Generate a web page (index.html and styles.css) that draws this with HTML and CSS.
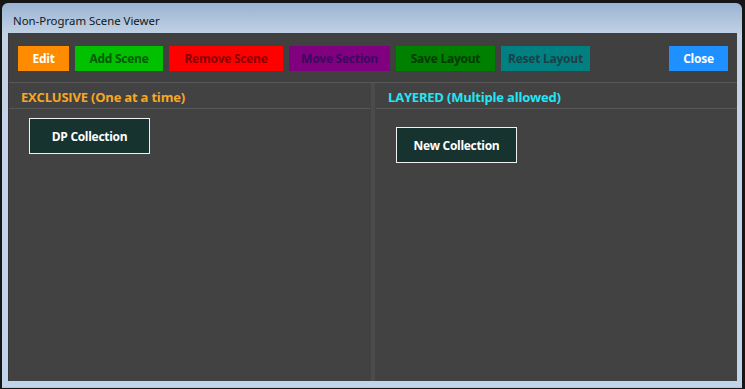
FILE: index.html
```html
<!DOCTYPE html>
<html lang="en">
<head>
    <meta charset="UTF-8">
    <meta name="viewport" content="width=device-width, initial-scale=1.0">
    <title>Non-Program Scene Viewer</title>
    <link rel="stylesheet" href="styles.css">
</head>
<body>
    <div class="window">
        <div class="titlebar">Non-Program Scene Viewer</div>
        <div class="client">
            <div class="toolbar">
                <button class="btn btn-edit">Edit</button>
                <button class="btn btn-add">Add Scene</button>
                <button class="btn btn-remove">Remove Scene</button>
                <button class="btn btn-move">Move Section</button>
                <button class="btn btn-save">Save Layout</button>
                <button class="btn btn-reset">Reset Layout</button>
                <span class="spacer"></span>
                <button class="btn btn-close">Close</button>
            </div>
            <div class="panels">
                <div class="panel">
                    <div class="panel-header exclusive">EXCLUSIVE (One at a time)</div>
                    <div class="panel-body">
                        <div class="scene">DP Collection</div>
                    </div>
                </div>
                <div class="divider"></div>
                <div class="panel">
                    <div class="panel-header layered">LAYERED (Multiple allowed)</div>
                    <div class="panel-body">
                        <div class="scene scene-new">New Collection</div>
                    </div>
                </div>
            </div>
        </div>
    </div>
</body>
</html>
```

FILE: styles.css
```css
body {
    margin: 0;
    background-color: #161616;
    font-family: "Open Sans", "Noto Sans", Arial, sans-serif;
}
.window {
    margin: 3px 3px 1px 2px;
    height: 385px;
    padding: 0 5px 6px 6px;
    box-sizing: border-box;
    border-radius: 6px 6px 0 0;
    background: linear-gradient(to bottom, #9ab3d2 0, #c3d3e6 32px, #c0d4ea 100%);
    border-bottom: 1px solid #8ed6f2;
    display: flex;
    flex-direction: column;
}
.titlebar {
    height: 30px;
    padding-left: 5px;
    line-height: 36px;
    font-family: "Noto Sans", "Open Sans", sans-serif;
    font-size: 11.4px;
    color: #101820;
}
.client {
    flex: 1;
    background-color: #424242;
    display: flex;
    flex-direction: column;
    border-left: 1px solid #363636;
}
.toolbar {
    display: flex;
    gap: 6px;
    height: 50px;
    padding: 13px 9px 0 9px;
    box-sizing: border-box;
    border-bottom: 1px solid #575757;
    background-color: #404040;
}
.spacer {
    flex: 1;
}
.btn {
    height: 25px;
    border: none;
    padding: 0;
    font-family: "Open Sans", sans-serif;
    font-size: 12px;
    font-weight: bold;
    letter-spacing: -0.25px;
}
.btn-edit { width: 51px; background-color: #ff8c00; color: #fff; }
.btn-add { width: 88px; background-color: #00c000; color: #005a00; }
.btn-remove { width: 114px; background-color: #ff0000; color: #8b0000; }
.btn-move { width: 101px; background-color: #800080; color: #3a0a5e; }
.btn-save { width: 99px; background-color: #008000; color: #003c00; }
.btn-reset { width: 89px; background-color: #008080; color: #1c4048; }
.btn-close { width: 59px; background-color: #1e90ff; color: #fff; }
.panels {
    flex: 1;
    display: flex;
}
.panel {
    flex: 1;
    display: flex;
    flex-direction: column;
}
.divider {
    width: 4px;
    margin: 0 1px;
    background-color: #4b4b4b;
}
.panel-header {
    height: 25px;
    line-height: 28px;
    padding-left: 12px;
    border-bottom: 1px solid #575757;
    font-size: 13px;
    font-weight: bold;
    letter-spacing: -0.2px;
}
.exclusive { color: #f7a823; }
.layered { color: #22e6f4; }
.panel-body {
    flex: 1;
    padding: 9px 20px;
}
.scene {
    width: 121px;
    height: 36px;
    box-sizing: border-box;
    border: 1px solid #f0f0f0;
    background-color: #173330;
    color: #fff;
    font-size: 12px;
    font-weight: bold;
    letter-spacing: -0.3px;
    display: flex;
    align-items: center;
    justify-content: center;
}
.scene-new {
    margin-top: 9px;
}
```
